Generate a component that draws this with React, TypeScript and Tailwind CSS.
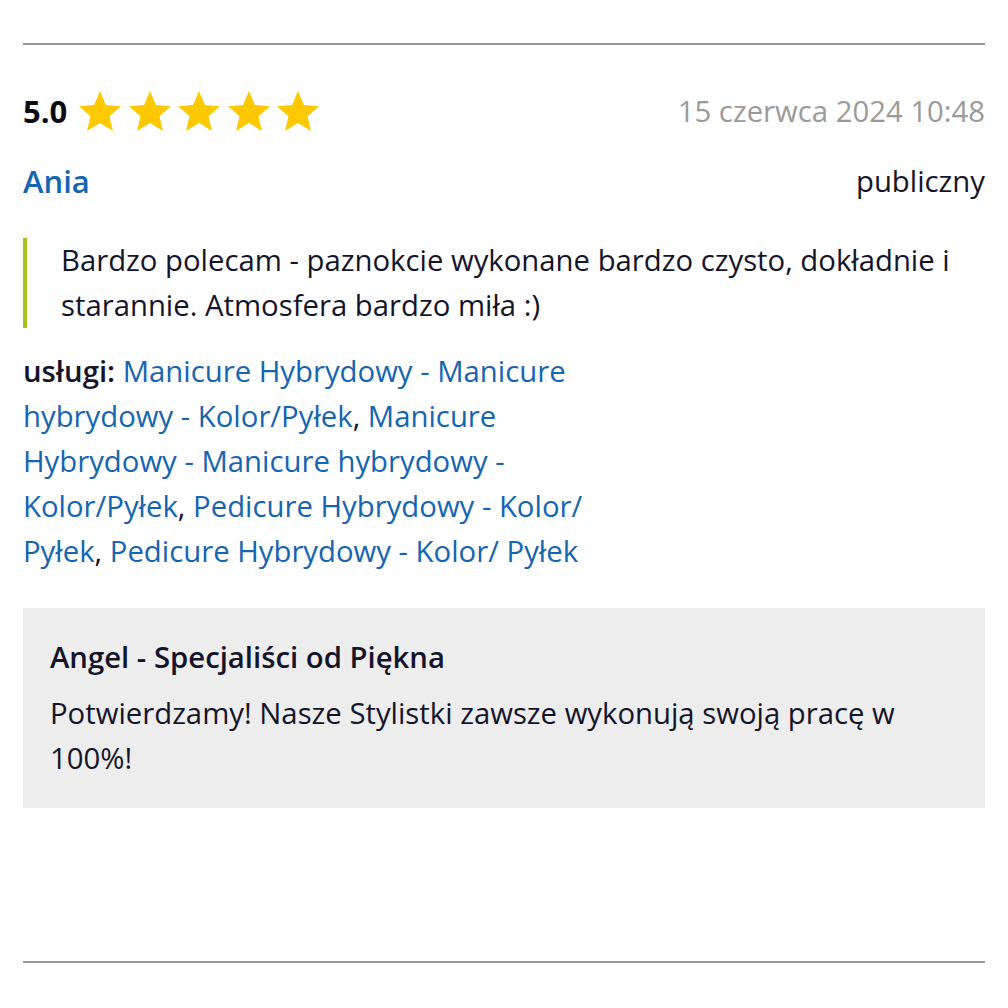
import React from "react";

const Star = () => (
  <svg viewBox="2 2 20 19" className="w-[42px] h-[40px] shrink-0" aria-hidden="true">
    <path
      fill="#fcc900"
      d="M12 17.27L18.18 21l-1.64-7.03L22 9.24l-7.19-.61L12 2 9.19 8.63 2 9.24l5.46 4.73L5.82 21z"
    />
  </svg>
);

export default function App() {
  const font = { fontFamily: '"Open Sans", "Noto Sans", sans-serif' };
  return (
    <div className="bg-white w-[1008px] h-[1008px] px-[23px] text-[#14142b]" style={font}>
      <div className="pt-[43px]">
        <div className="border-t-2 border-[#999999]" />
        <div className="mt-[44px] flex items-center justify-between h-[45px]">
          <div className="flex items-center">
            <span className="text-[31px] font-bold leading-[45px] text-[#0b0b14]">5.0</span>
            <div className="flex gap-[7.5px] ml-[12px] -mt-[2px]">
              <Star />
              <Star />
              <Star />
              <Star />
              <Star />
            </div>
          </div>
          <span className="text-[29.3px] leading-[45px] text-[#9a9a9a]">15 czerwca 2024 10:48</span>
        </div>
        <div className="mt-[25px] flex items-center justify-between">
          <span className="text-[31px] font-semibold leading-[45px] text-[#1565b0]">Ania</span>
          <span className="text-[29.3px] leading-[45px]">publiczny</span>
        </div>
        <div className="mt-[34px] border-l-4 border-[#a9c21b] pl-[34px] text-[29.3px] leading-[45px]">
          Bardzo polecam - paznokcie wykonane bardzo czysto, dokładnie i starannie. Atmosfera bardzo miła :)
        </div>
        <div className="mt-[21px] max-w-[600px] text-[29.3px] leading-[45px]">
          <span className="font-semibold">usługi:</span>{" "}
          <a className="text-[#1565b0]">Manicure Hybrydowy - Manicure hybrydowy - Kolor/Pyłek</a>,{" "}
          <a className="text-[#1565b0]">Manicure Hybrydowy - Manicure hybrydowy - Kolor/Pyłek</a>,{" "}
          <a className="text-[#1565b0]">Pedicure Hybrydowy - Kolor/ Pyłek</a>,{" "}
          <a className="text-[#1565b0]">Pedicure Hybrydowy - Kolor/ Pyłek</a>
        </div>
        <div className="mt-[34px] bg-[#ededed] px-[27px] pt-[27px] pb-[27px]">
          <div className="text-[29.3px] font-semibold leading-[45px]">Angel - Specjaliści od Piękna</div>
          <div className="mt-[11px] text-[29.3px] leading-[45px]">
            Potwierdzamy! Nasze Stylistki zawsze wykonują swoją pracę w 100%!
          </div>
        </div>
        <div className="mt-[153px] border-t-2 border-[#999999]" />
      </div>
    </div>
  );
}
